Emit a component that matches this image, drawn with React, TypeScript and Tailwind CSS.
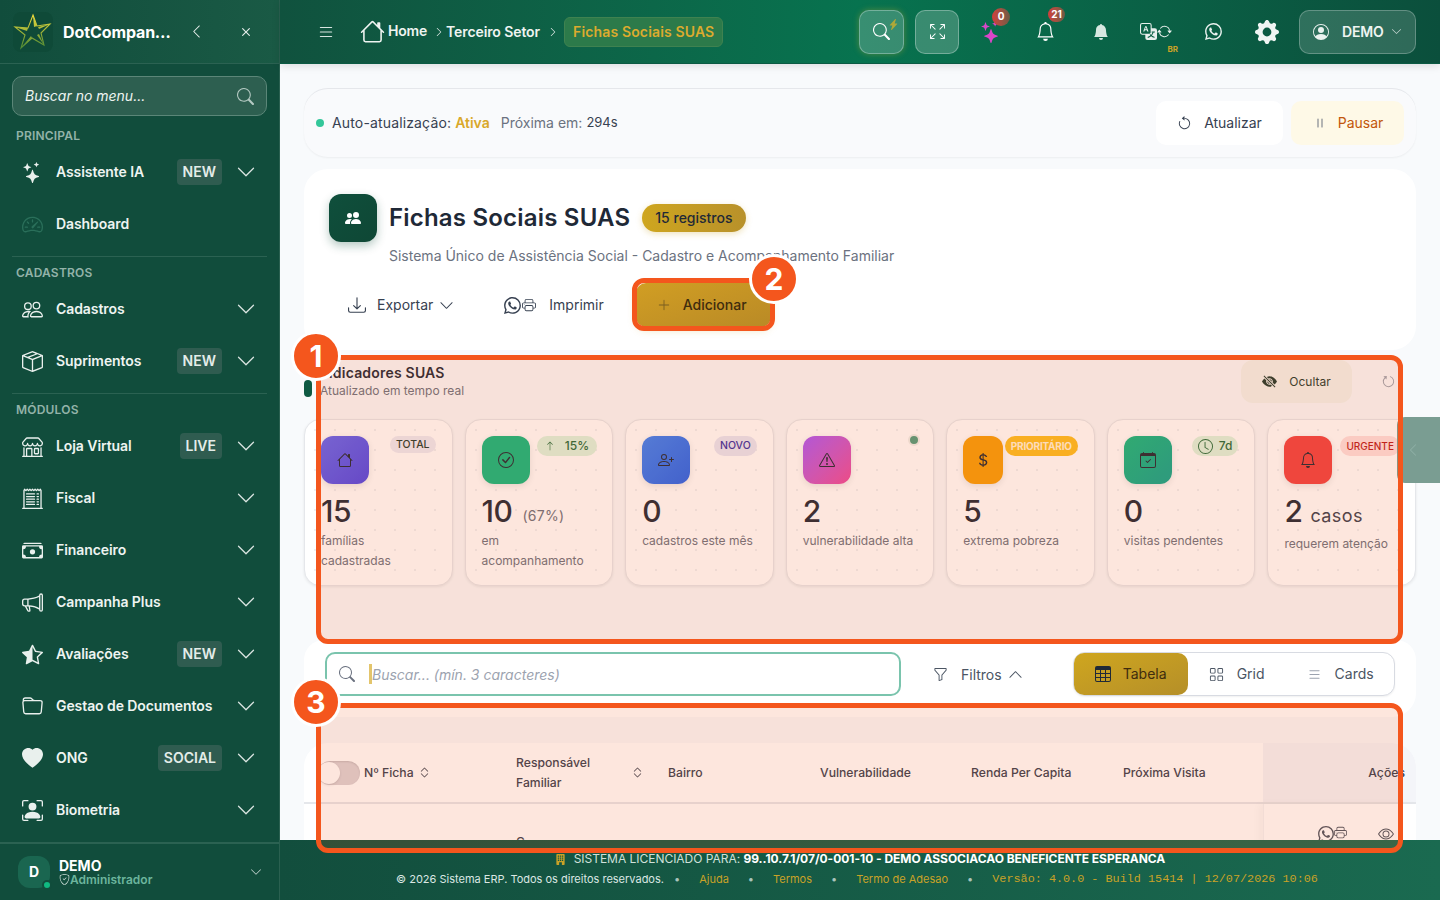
import type { ReactNode } from "react";
import {
  BsArrowClockwise,
  BsArrowRepeat,
  BsArrowUp,
  BsArrowsFullscreen,
  BsBell,
  BsBellFill,
  BsBoxSeam,
  BsBuildingFill,
  BsCalendarCheck,
  BsCashStack,
  BsCheckCircle,
  BsChevronDown,
  BsChevronExpand,
  BsChevronLeft,
  BsChevronRight,
  BsChevronUp,
  BsClock,
  BsCurrencyDollar,
  BsDownload,
  BsExclamationTriangle,
  BsEye,
  BsEyeSlashFill,
  BsFolder,
  BsFunnel,
  BsGearFill,
  BsGrid,
  BsHeartFill,
  BsHouse,
  BsLightningChargeFill,
  BsList,
  BsMegaphone,
  BsPause,
  BsPeople,
  BsPeopleFill,
  BsPersonBoundingBox,
  BsPersonCircle,
  BsPersonPlus,
  BsPlusLg,
  BsPrinter,
  BsReceiptCutoff,
  BsSearch,
  BsShieldCheck,
  BsShop,
  BsSpeedometer2,
  BsStarHalf,
  BsStars,
  BsTable,
  BsTranslate,
  BsWhatsapp,
  BsX,
} from "react-icons/bs";

function MenuItem({ icon, label, tag, noArrow }: { icon: ReactNode; label: string; tag?: string; noArrow?: boolean }) {
  return (
    <div className="flex h-[52px] items-center pl-[22px] pr-[23px]">
      <span className="flex w-[34px] shrink-0 items-center text-[21px] text-[#e9f0ed]">{icon}</span>
      <span className="flex-1 text-sm font-semibold tracking-[-0.08px] text-[#eef4f1]">{label}</span>
      {tag && <span className="mr-[14px] rounded-[4px] bg-[#2f5c50] px-1.5 py-[3px] text-sm font-semibold leading-5 text-[#e4ece9]">{tag}</span>}
      {!noArrow && <BsChevronDown className="text-[20px] text-[#d9e4e0]" />}
    </div>
  );
}

function SectionTitle({ children }: { children: string }) {
  return <div className="flex h-[21px] items-center px-4 text-xs font-semibold tracking-[0.2px] text-[#93b3a9]">{children}</div>;
}

function Divider() {
  return <div className="mx-3 mt-1.5 mb-[5px] border-t border-[#2b6252]" />;
}

function Sidebar() {
  return (
    <aside className="flex h-full w-[280px] shrink-0 flex-col border-r border-[#2a6050] bg-[#114d3c]">
      <div className="flex h-16 shrink-0 items-center border-b border-[#2b6252] bg-gradient-to-r from-[#114d3c] to-[#1a5a45] pl-[13px]">
        <svg width="40" height="40" viewBox="0 0 40 40" className="rounded-lg bg-[#0f4a38]">
          <defs>
            <linearGradient id="star" x1="0" y1="0" x2="0" y2="1">
              <stop offset="0" stopColor="#f0dc3c" />
              <stop offset="1" stopColor="#4e8a34" />
            </linearGradient>
          </defs>
          <path d="M20 3 L24 14 L37 12 L28 21 L31 33 L19 26 L8 36 L12 23 L2 15 L15 16 Z" fill="none" stroke="url(#star)" strokeWidth="1.1" />
          <path d="M20 3 L24 14 L21 15 Z M37 12 L26 17 L25 15 Z M31 33 L24 23 L26 22 Z M8 36 L18 24 L19 26 Z M2 15 L14 19 L15 16 Z" fill="url(#star)" />
        </svg>
        <span className="ml-2.5 w-[114px] truncate text-base font-bold tracking-[-0.1px] text-white">DotCompany ERP</span>
        <BsChevronLeft className="ml-[12px] text-[15px] text-[#e6eeeb]" />
        <BsX className="ml-[33px] text-[18px] text-[#e6eeeb]" />
      </div>
      <div className="px-3 pt-3 pb-[9px]">
        <div className="flex h-10 items-center justify-between rounded-[10px] border border-[#5b8678] bg-[#2d5f50] pl-3 pr-3">
          <span className="text-sm italic text-[#eef4f1]">Buscar no menu...</span>
          <BsSearch className="text-[17px] text-[#b4c9c2]" />
        </div>
      </div>
      <div className="flex-1">
        <SectionTitle>PRINCIPAL</SectionTitle>
        <MenuItem icon={<BsStars />} label="Assistente IA" tag="NEW" />
        <MenuItem icon={<BsSpeedometer2 className="text-[#2a6f5a]" />} label="Dashboard" noArrow />
        <Divider />
        <SectionTitle>CADASTROS</SectionTitle>
        <MenuItem icon={<BsPeople />} label="Cadastros" />
        <MenuItem icon={<BsBoxSeam />} label="Suprimentos" tag="NEW" />
        <Divider />
        <SectionTitle>MÓDULOS</SectionTitle>
        <MenuItem icon={<BsShop />} label="Loja Virtual" tag="LIVE" />
        <MenuItem icon={<BsReceiptCutoff />} label="Fiscal" />
        <MenuItem icon={<BsCashStack />} label="Financeiro" />
        <MenuItem icon={<BsMegaphone />} label="Campanha Plus" />
        <MenuItem icon={<BsStarHalf />} label="Avaliações" tag="NEW" />
        <MenuItem icon={<BsFolder />} label="Gestao de Documentos" />
        <MenuItem icon={<BsHeartFill />} label="ONG" tag="SOCIAL" />
        <MenuItem icon={<BsPersonBoundingBox />} label="Biometria" />
      </div>
      <div className="flex h-[58px] shrink-0 items-center border-t-2 border-[#2b6252] pl-[18px] pr-[17px]">
        <div className="relative flex h-8 w-8 items-center justify-center rounded-xl bg-[#1a6650] text-sm font-bold text-white">
          D
          <span className="absolute -right-0.5 -bottom-0.5 h-2.5 w-2.5 rounded-full border-2 border-[#114d3c] bg-[#10b981]" />
        </div>
        <div className="ml-[9px] flex-1 leading-none">
          <div className="text-sm leading-[14px] font-bold text-white">DEMO</div>
          <div className="flex items-center text-xs leading-[13px] font-semibold text-[#6cb59d]">
            <BsShieldCheck className="text-[11px] text-[#cfe0da]" />
            Administrador
          </div>
        </div>
        <BsChevronDown className="text-xs text-[#c6d6d1]" />
      </div>
    </aside>
  );
}

function TopBar() {
  return (
    <header className="relative z-10 flex h-16 shrink-0 items-center border-b border-[#0b5a43] bg-gradient-to-r from-[#10523e] via-[#07734f] to-[#0b4f3c] pl-[37px] pr-6 shadow-[0_2px_8px_rgba(0,0,0,0.12)]">
      <BsList className="text-[18px] text-[#d7e5e0]" />
      <BsHouse className="ml-[25px] text-[25px] text-[#eef4f1]" />
      <span className="ml-[3px] -mt-0.5 text-sm font-semibold tracking-[-0.2px] text-[#eef4f1]">Home</span>
      <BsChevronRight className="ml-[7px] text-[10px] text-[#e3ecea]" />
      <span className="ml-[2px] text-sm font-semibold tracking-[-0.1px] text-[#eef4f1]">Terceiro Setor</span>
      <BsChevronRight className="ml-[8px] text-[10px] text-[#e3ecea]" />
      <span className="ml-[6px] rounded-md border border-[#3f8250] bg-[#2c7a4a] px-2 py-1 text-sm leading-5 font-semibold tracking-[0.15px] text-[#dcab2e]">Fichas Sociais SUAS</span>
      <div className="flex-1" />
      <div className="relative flex h-11 w-[45px] items-center justify-center rounded-[10px] border border-white/30 bg-white/20 shadow-[0_0_6px_rgba(220,180,40,0.35)]">
        <BsSearch className="text-[17px] text-white" />
        <BsLightningChargeFill className="absolute top-2 right-1 text-[11px] text-[#b0a838]" />
      </div>
      <div className="ml-[11px] flex h-11 w-11 items-center justify-center rounded-[10px] border border-white/30 bg-white/20">
        <BsArrowsFullscreen className="text-[15px] text-white" />
      </div>
      <div className="relative ml-[21px] flex w-[22px] justify-center">
        <BsStars className="text-[22px] text-[#d946c8]" />
        <span className="absolute -top-[13px] left-[12px] flex h-[18px] w-[18px] items-center justify-center rounded-full bg-gradient-to-r from-[#d23c3c] to-[#6b5a45] text-[10px] font-bold text-white">0</span>
      </div>
      <div className="relative ml-[32px] flex w-[22px] justify-center">
        <BsBell className="text-[19px] text-white" />
        <span className="absolute -top-[15px] left-[14px] flex h-[15px] w-[17px] items-center justify-center rounded-full bg-gradient-to-r from-[#d23c3c] to-[#6b5a45] text-[10px] font-bold text-white">21</span>
      </div>
      <BsBellFill className="ml-[37px] text-[16px] text-[#d7e8e1]" />
      <div className="relative ml-[31px] flex items-center text-[#e8f0ed]">
        <BsTranslate className="text-[17px]" />
        <BsArrowRepeat className="text-[15px]" />
        <span className="absolute top-[20px] right-[-6px] text-[8px] font-bold text-[#c9a227]">BR</span>
      </div>
      <BsWhatsapp className="ml-[33px] text-[17px] text-[#eaf2ef]" />
      <BsGearFill className="ml-[33px] text-[24px] text-[#f0f5f3]" />
      <div className="ml-5 flex h-11 w-[117px] items-center rounded-[10px] border border-white/25 bg-white/15 pl-[13px]">
        <BsPersonCircle className="text-[16px] text-[#eaf2ef]" />
        <span className="ml-[13px] text-sm font-semibold tracking-[-0.2px] text-[#eef4f1]">DEMO</span>
        <BsChevronDown className="ml-2 text-[11px] text-[#c6d6d1]" />
      </div>
    </header>
  );
}

function Kpi({
  icon,
  iconBg,
  iconW = "w-12",
  badge,
  number,
  suffix,
  label,
  labelTop = "mt-[2px]",
}: {
  icon: ReactNode;
  iconBg: string;
  iconW?: string;
  badge?: ReactNode;
  number: string;
  suffix?: ReactNode;
  label: string;
  labelTop?: string;
}) {
  return (
    <div className="h-[167px] overflow-hidden rounded-2xl border border-[#e5e7eb] bg-white bg-[radial-gradient(#eef0f3_1px,transparent_1px)] bg-[length:20px_20px] px-[16px] pt-4 shadow-[0_1px_3px_rgba(0,0,0,0.08)]">
      <div className="flex h-12 items-start justify-between">
        <div className={`flex h-12 ${iconW} shrink-0 items-center justify-center rounded-xl text-[16px] text-[#1f2937] shadow-[0_2px_6px_rgba(0,0,0,0.1)] ${iconBg}`}>{icon}</div>
        {badge}
      </div>
      <div className="mt-[9px] flex h-9 items-center">
        <span className="text-[30px] font-medium tracking-[-0.5px] text-[#1f2937]">{number}</span>
        {suffix}
      </div>
      <p className={`${labelTop} text-xs leading-[19.5px] text-[#6b7280]`}>{label}</p>
    </div>
  );
}

function ColHead({ className, children }: { className: string; children: ReactNode }) {
  return <div className={`flex shrink-0 items-center text-[12.2px] leading-5 font-medium text-[#374151] ${className}`}>{children}</div>;
}

function MainArea() {
  return (
    <main className="flex-1 overflow-hidden bg-[#f8fafc] px-6 pt-6">
      <div className="flex h-[69px] items-center rounded-3xl border-t border-[#e5e7eb] bg-[#f9fafc] pl-3 pr-3 shadow-[0_1px_2px_rgba(0,0,0,0.05)]">
        <span className="h-2 w-2 rounded-full bg-[#34c79a]" />
        <span className="ml-2 text-sm tracking-[0.15px] text-[#374151]">Auto-atualização:</span>
        <span className="ml-1 text-sm font-semibold text-[#d9a82a]">Ativa</span>
        <span className="ml-[11px] text-sm text-[#6b7280]">Próxima em:</span>
        <span className="ml-1 text-[13px] text-[#374151]">294s</span>
        <div className="flex-1" />
        <button className="flex h-11 w-[127px] items-center justify-center gap-3 rounded-[10px] bg-white text-sm text-[#374151]">
          <BsArrowClockwise className="text-[15px] -scale-x-100" />
          Atualizar
        </button>
        <button className="ml-2 flex h-11 w-[113px] items-center justify-center gap-2.5 rounded-[10px] bg-[#fef9e7] text-sm text-[#c2570c]">
          <BsPause className="text-[16px] text-[#6b7280]" />
          Pausar
        </button>
      </div>

      <section className="mt-3 h-[181px] rounded-3xl bg-white pl-[25px] pt-[25px]">
        <div className="flex items-center">
          <div className="flex h-12 w-12 items-center justify-center rounded-xl bg-gradient-to-br from-[#0f4f3c] to-[#0f4735] text-[16px] text-white shadow-[0_4px_10px_rgba(15,79,60,0.3)]">
            <BsPeopleFill />
          </div>
          <h1 className="ml-3 text-[24px] font-semibold tracking-[0.2px] text-[#1f2937]">Fichas Sociais SUAS</h1>
          <span className="ml-3 rounded-full bg-gradient-to-r from-[#cfa61e] to-[#b8912a] px-[13px] py-1 text-sm leading-5 font-medium text-[#1f2937] shadow-[0_2px_6px_rgba(201,162,39,0.3)]">15 registros</span>
        </div>
        <p className="mt-1 ml-[60px] text-sm text-[#6b7280]">Sistema Único de Assistência Social - Cadastro e Acompanhamento Familiar</p>
        <div className="mt-[17px] flex h-11 items-center text-sm text-[#374151]">
          <BsDownload className="ml-[19px] text-[18px]" />
          <span className="ml-[11px]">Exportar</span>
          <BsChevronDown className="ml-1.5 text-[15px]" />
          <BsWhatsapp className="ml-[50px] text-[17px]" />
          <BsPrinter className="ml-px text-[14px]" />
          <span className="ml-[13px]">Imprimir</span>
          <button className="ml-8 flex h-11 w-[135px] items-center rounded-[10px] bg-gradient-to-br from-[#d19e23] to-[#b98a26] pl-[21px] text-[#3f2c0e] shadow-[0_3px_8px_rgba(201,162,39,0.3)]">
            <BsPlusLg className="text-[14px] text-[#7a5f20]" />
            <span className="ml-3 font-medium">Adicionar</span>
          </button>
        </div>
      </section>

      <section className="mt-2.5">
        <div className="flex h-[43px] items-start">
          <div className="mt-[20px] h-[17px] w-2 rounded-full bg-[#0f5a43]" />
          <div className="ml-2 pt-1">
            <div className="text-sm leading-[18px] font-semibold tracking-[0.2px] text-[#1f2937]">Indicadores SUAS</div>
            <div className="text-xs leading-[17px] text-[#6b7280]">Atualizado em tempo real</div>
          </div>
          <div className="flex-1" />
          <button className="flex h-[43px] w-[111px] items-center justify-center gap-3 rounded-xl bg-[#f2f4ee] text-xs text-[#1f3a30]">
            <BsEyeSlashFill className="text-[15px]" />
            Ocultar
          </button>
          <BsArrowClockwise className="mt-[14px] ml-[29px] mr-[20px] text-[15px] -rotate-45 text-[#9ca3af]" />
        </div>

        <div className="mt-4 grid grid-cols-7 gap-3">
          <Kpi
            icon={<BsHouse />}
            iconBg="bg-gradient-to-br from-[#6366f1] to-[#4f46e5]"
            badge={<span className="rounded-full bg-[#ecebf5] px-1.5 text-[10.5px] leading-[17px] font-medium text-[#1f3a30]">TOTAL</span>}
            number="15"
            label="famílias cadastradas"
          />
          <Kpi
            icon={<BsCheckCircle />}
            iconBg="bg-[#10b981]"
            badge={
              <span className="mr-[-1px] flex items-center gap-2.5 rounded-full bg-[#dcf5e0] pr-2 pl-2 text-xs leading-5 font-medium text-[#1f6b3c]">
                <BsArrowUp className="text-[10px]" />
                15%
              </span>
            }
            number="10"
            suffix={<span className="mt-2.5 ml-2.5 text-sm tracking-[0.3px] text-[#6b7280]">(67%)</span>}
            label="em acompanhamento"
          />
          <Kpi
            icon={<BsPersonPlus />}
            iconBg="bg-gradient-to-br from-[#3b82f6] to-[#2563eb]"
            badge={<span className="rounded-full bg-[#e7e7f5] px-1.5 text-[10.5px] leading-5 font-medium text-[#3730a3]">NOVO</span>}
            number="0"
            label="cadastros este mês"
          />
          <Kpi
            icon={<BsExclamationTriangle />}
            iconBg="bg-gradient-to-br from-[#a855f7] to-[#ec4899]"
            badge={<span className="mt-[-2px] mr-[-3px] h-3 w-3 rounded-full border-2 border-[#eef0ec] bg-[#4f9d7f]" />}
            number="2"
            label="vulnerabilidade alta"
          />
          <Kpi
            icon={<BsCurrencyDollar />}
            iconBg="bg-[#f59e0b]"
            iconW="w-10"
            badge={<span className="rounded-full bg-[#fbbf24] px-1.5 text-[10px] leading-5 font-bold tracking-[-0.2px] whitespace-nowrap text-[#fff3d6]">PRIORITÁRIO</span>}
            number="5"
            label="extrema pobreza"
          />
          <Kpi
            icon={<BsCalendarCheck />}
            iconBg="bg-gradient-to-br from-[#10b981] to-[#0ea58f]"
            badge={
              <span className="flex items-center gap-1.5 rounded-full bg-[#dcf5e0] px-1.5 text-xs leading-5 font-medium text-[#1f6b3c]">
                <BsClock className="text-[15px]" />
                7d
              </span>
            }
            number="0"
            label="visitas pendentes"
          />
          <Kpi
            icon={<BsBell />}
            iconBg="bg-[#ef4444]"
            badge={<span className="ml-2 rounded-full bg-[#fde0e0] px-1.5 text-[10px] leading-5 font-medium whitespace-nowrap text-[#b91c1c]">URGENTE</span>}
            number="2"
            suffix={<span className="mt-2.5 ml-2 text-lg tracking-[0.4px] text-[#374151]">casos</span>}
            label="requerem atenção"
            labelTop="mt-[5px]"
          />
        </div>
      </section>

      <section className="mt-[54px] flex h-[77px] rounded-t-[20px] rounded-b-3xl bg-white pt-3 pr-[21px] pl-[21px]">
        <div className="flex h-11 w-[576px] items-center rounded-[10px] border-2 border-[#7ac4ad] bg-white pl-3">
          <BsSearch className="text-[16px] text-[#6b7280]" />
          <span className="ml-[14px] h-5 w-[3px] bg-[#e3c56c]" />
          <span className="mt-0.5 text-sm text-[#9ca3af] italic">Buscar... (mín. 3 caracteres)</span>
        </div>
        <div className="ml-8 flex h-11 items-center text-sm text-[#4b5563]">
          <BsFunnel className="text-[15px]" />
          <span className="ml-[13px] mt-0.5">Filtros</span>
          <BsChevronUp className="ml-1.5 text-[15px]" />
        </div>
        <div className="ml-[50px] flex h-11 w-[322px] rounded-xl border border-[#d8dbe2] bg-white text-sm text-[#4b5563] shadow-[0_1px_2px_rgba(0,0,0,0.06)]">
          <div className="flex w-[114px] items-center justify-center gap-3 rounded-[10px] bg-gradient-to-br from-[#cfa61e] to-[#b58f28] text-[#3f2c0e]">
            <BsTable className="text-[16px] text-[#1f2937]" />
            Tabela
          </div>
          <div className="ml-[21px] flex items-center gap-[13px]">
            <BsGrid className="text-[15px]" />
            Grid
          </div>
          <div className="ml-[42px] flex items-center gap-[13px]">
            <BsList className="text-[15px] text-[#9ca3af]" />
            Cards
          </div>
        </div>
      </section>

      <section className="mt-[26px] overflow-hidden rounded-t-3xl bg-white">
        <div className="flex h-[61px] border-b-2 border-[#e5e7eb]">
          <ColHead className="w-[212px] pl-3.5">
            <span className="h-6 w-[42px] rounded-full bg-[#dcd4d8] shadow-[inset_0_1px_2px_rgba(0,0,0,0.12)]">
              <span className="block h-[22px] w-[22px] translate-y-px rounded-full bg-white shadow" />
            </span>
            <span className="ml-1">Nº Ficha</span>
            <BsChevronExpand className="ml-1 text-[13px]" />
          </ColHead>
          <ColHead className="w-[152px]">
            <span className="w-[115px]">
              Responsável
              <br />
              Familiar
            </span>
            <BsChevronExpand className="text-[13px]" />
          </ColHead>
          <ColHead className="w-[152px]">Bairro</ColHead>
          <ColHead className="w-[151px]">Vulnerabilidade</ColHead>
          <ColHead className="w-[152px]">Renda Per Capita</ColHead>
          <ColHead className="w-[140px]">Próxima Visita</ColHead>
          <ColHead className="flex-1 justify-end bg-[#f4f5f9] pr-[11px]">Ações</ColHead>
        </div>
        <div className="flex h-[70px]">
          <div className="w-[212px]" />
          <div className="w-[152px] pt-[29px] text-sm text-[#374151]">S</div>
          <div className="w-[595px]" />
          <div className="flex flex-1 items-start border-l border-[#f3f4f6] pt-[22px] pl-[54px] text-[#4b5563] shadow-[-4px_0_8px_rgba(0,0,0,0.03)]">
            <BsWhatsapp className="text-[16px]" />
            <BsPrinter className="text-[13px]" />
            <BsEye className="ml-[31px] text-[16px]" />
          </div>
        </div>
      </section>
    </main>
  );
}

function PageFooter() {
  return (
    <footer className="relative h-[60px] shrink-0 bg-gradient-to-r from-[#124e3d] to-[#1a6a50] pt-2.5 text-center">
      <div className="flex items-center justify-center text-xs leading-[18px] tracking-[-0.03px] text-[#cfe0da]">
        <BsBuildingFill className="mr-2 text-[11px] text-[#c9a227]" />
        SISTEMA LICENCIADO PARA:&nbsp;
        <span className="font-bold text-white">99..10.7.1/07/0-001-10 - DEMO ASSOCIACAO BENEFICENTE ESPERANCA</span>
      </div>
      <div className="mt-[2px] flex items-center justify-center gap-2 pr-[6px] text-[11px] leading-[18px] text-[#dbe7e3]">
        <span className="mr-[2px]">© 2026 Sistema ERP. Todos os direitos reservados.</span>
        <span className="text-[#a9c4bb]">•</span>
        <span className="mx-[11px] text-[#c9a227]">Ajuda</span>
        <span className="text-[#a9c4bb]">•</span>
        <span className="mx-[11px] text-[#c9a227]">Termos</span>
        <span className="text-[#a9c4bb]">•</span>
        <span className="mx-[11px] text-[#c9a227]">Termo de Adesao</span>
        <span className="text-[#a9c4bb]">•</span>
        <span className="ml-[11px] font-['Liberation_Mono',monospace] text-[11.8px] text-[#c9a227]">Versão: 4.0.0 - Build 15414 | 12/07/2026 10:06</span>
      </div>
    </footer>
  );
}

function NumberPin({ n, className }: { n: string; className: string }) {
  return (
    <div className={`absolute z-30 flex h-[50px] w-[50px] items-center justify-center rounded-full border-[3px] border-white bg-[#f4561d] text-[30px] font-bold text-white ${className}`}>
      {n}
    </div>
  );
}

export default function App() {
  return (
    <div className="relative flex h-[900px] w-[1440px] overflow-hidden font-['Inter',sans-serif]">
      <Sidebar />
      <div className="flex min-w-0 flex-1 flex-col">
        <TopBar />
        <MainArea />
        <PageFooter />
      </div>

      {/* side tab on the right edge */}
      <div className="absolute top-[417px] right-0 z-10 flex h-[66px] w-[43px] items-center justify-center rounded-l-lg bg-[#7a9d92] pr-3">
        <BsChevronLeft className="text-[14px] text-[#8fb0a6]" />
      </div>

      {/* tutorial highlights */}
      <div className="absolute top-[355px] left-[316px] z-20 h-[289px] w-[1087px] rounded-xl border-[5px] border-[#f4561d] bg-[#f4561d]/15" />
      <div className="absolute top-[278px] left-[632px] z-20 h-[53px] w-[143px] rounded-xl border-[5px] border-[#f4561d]" />
      <div className="absolute top-[703px] left-[316px] z-20 h-[150px] w-[1087px] rounded-xl border-[5px] border-[#f4561d] bg-[#f4561d]/15" />
      <NumberPin n="1" className="top-[331px] left-[291px]" />
      <NumberPin n="2" className="top-[254px] left-[749px]" />
      <NumberPin n="3" className="top-[677px] left-[291px]" />
    </div>
  );
}
